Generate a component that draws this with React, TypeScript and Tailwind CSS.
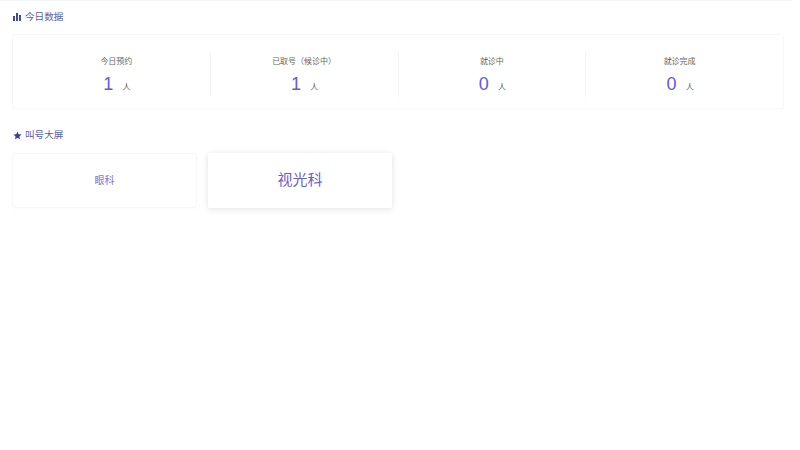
const cjk = { fontFamily: '"Liberation Sans", "Noto Sans CJK SC", sans-serif' };

const stats = [
  { label: "今日预约", value: 1 },
  { label: "已取号（候诊中）", value: 1 },
  { label: "就诊中", value: 0 },
  { label: "就诊完成", value: 0 },
];

function Bars() {
  return (
    <svg width="8" height="8" viewBox="0 0 8 8" fill="#3f4aa3">
      <rect x="0" y="3" width="2" height="5" />
      <rect x="3" y="0" width="2" height="8" />
      <rect x="6" y="2" width="2" height="6" />
    </svg>
  );
}

function Star() {
  return (
    <svg width="9" height="9" viewBox="0 0 24 24" fill="#3a3f9e">
      <path d="M12 1.5l3.2 7 7.6.8-5.7 5.1 1.6 7.5L12 18.1l-6.7 3.800 1.6-7.500L1.200 9.300l7.600-.8z" />
    </svg>
  );
}

export default function App() {
  return (
    <div className="h-[450px] w-[800px] overflow-hidden bg-white" style={cjk}>
      <div className="mr-[8px] h-[1px] bg-[#f3f4f6]" />
      <div className="pl-[12px] pr-[16px]">
        <div className="flex h-[32px] items-center gap-[4px] pl-[1px] text-[9.6px] leading-none text-[#5560ae]">
          <Bars />
          <span>今日数据</span>
        </div>
        <div className="mt-[1px] flex h-[75px] items-start rounded-[3px] border border-[#f7f7fa] px-[10px] pt-[17px]">
          {stats.map((s, i) => (
            <div
              key={s.label}
              className={`flex h-[45px] flex-1 flex-col items-center pt-[4px] ${i < 3 ? "border-r border-[#f3f4f6]" : ""}`}
            >
              <div className="text-[8px] leading-[12px] text-[#666666]">{s.label}</div>
              <div className="mt-[6px] flex items-baseline gap-[9px] pl-[1px] leading-[20px]">
                <span className="text-[18px] text-[#6258e4]">{s.value}</span>
                <span className="text-[8px] text-[#555555]">人</span>
              </div>
            </div>
          ))}
        </div>
        <div className="mt-[16px] flex h-[20px] items-center gap-[3px] pl-[1px] text-[9.6px] leading-none text-[#5560ae]">
          <Star />
          <span>叫号大屏</span>
        </div>
        <div className="mt-[8px] flex gap-[11px]">
          <div className="flex h-[55px] w-[185px] items-center justify-center rounded-[3px] border border-[#f7f7fa] text-[10px] text-[#7a74d4] shadow-[0_1px_3px_rgba(0,0,0,0.02)]">
            眼科
          </div>
          <div className="flex h-[55px] w-[184px] items-center justify-center rounded-[2px] bg-white text-[15px] text-[#6860cc] shadow-[0_1px_6px_rgba(0,0,0,0.12)]">
            视光科
          </div>
        </div>
      </div>
    </div>
  );
}
